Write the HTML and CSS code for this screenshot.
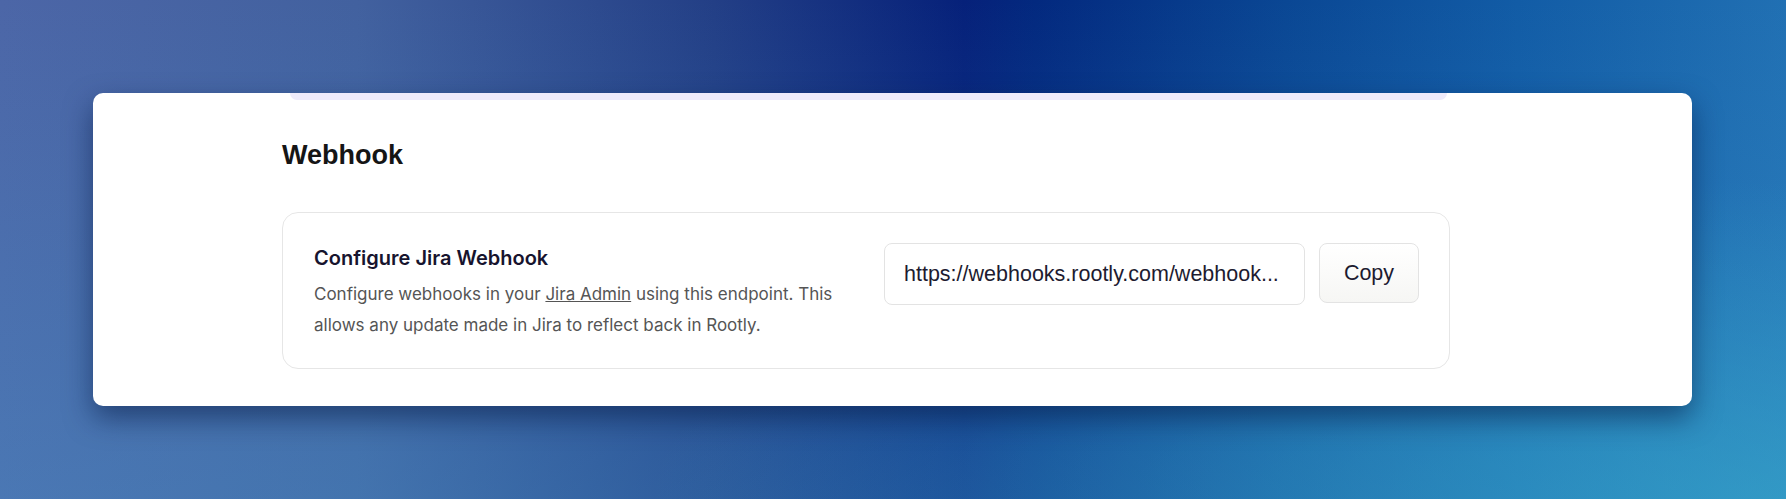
FILE: index.html
```html
<!DOCTYPE html>
<html lang="en">
<head>
    <meta charset="UTF-8">
    <meta name="viewport" content="width=device-width, initial-scale=1.0">
    <title>Webhook</title>
    <link rel="stylesheet" href="styles.css">
</head>
<body>
    <div class="panel">
        <div class="content">
            <!-- bottom edge of the section above, scrolled out of view -->
            <div class="prev-section"></div>
            <h2>Webhook</h2>
            <div class="webhook-box">
                <div class="webhook-info">
                    <h3>Configure Jira Webhook</h3>
                    <p>Configure webhooks in your <a href="#">Jira Admin</a> using this endpoint. This allows any update made in Jira to reflect back in Rootly.</p>
                </div>
                <div class="webhook-copy">
                    <div class="url-field">https://webhooks.rootly.com/webhook...</div>
                    <button>Copy</button>
                </div>
            </div>
        </div>
    </div>
</body>
</html>
```

FILE: styles.css
```css
html, body {
    height: 100%;
}
body {
    margin: 0;
    overflow: hidden;
    font-family: "Liberation Sans", Arial, sans-serif;
    background:
        radial-gradient(ellipse at 100% 100%, rgba(55, 175, 205, 0.55) 0%, rgba(55, 175, 205, 0) 45%),
        linear-gradient(to bottom, rgba(70, 160, 210, 0) 0%, rgba(70, 160, 210, 0.3) 100%),
        linear-gradient(to right, #4c66a7 0%, #42619f 20%, #233f86 40%, #06217a 54%, #03297f 58%, #0a4794 72%, #125ca6 85%, #2170b3 100%);
}
.panel {
    box-sizing: border-box;
    width: 1599px;
    height: 313px;
    margin: 93px 0 0 93px;
    background-color: #fff;
    border-radius: 10px;
    box-shadow: 0 12px 28px rgba(5, 25, 70, 0.55);
    overflow: hidden;
}
.content {
    width: 1168px;
    margin-left: 189px;
}
.prev-section {
    height: 7px;
    margin: 0 3px 0 8px;
    background-color: #eeebfb;
    border-radius: 0 0 14px 14px;
}
h2 {
    margin: 39px 0 41px;
    font-size: 27px;
    line-height: 32px;
    font-weight: bold;
    color: #151515;
}
.webhook-box {
    display: flex;
    justify-content: space-between;
    align-items: flex-start;
    padding: 30px 30px 27px 31px;
    border: 1px solid #e6e6e6;
    border-radius: 16px;
}
.webhook-info {
    width: 540px;
    margin-top: 2px;
    font-family: Inter, "Noto Sans", sans-serif;
}
h3 {
    margin: 0 0 8px;
    font-size: 20px;
    line-height: 26px;
    font-weight: 600;
    color: #17142e;
}
p {
    margin: 0;
    font-size: 17px;
    line-height: 31px;
    color: #555;
}
p a {
    color: #555;
}
.webhook-copy {
    display: flex;
    align-items: flex-start;
    gap: 14px;
}
.url-field,
button {
    box-sizing: border-box;
    border: 1px solid #e3e3e3;
    border-radius: 8px;
    font-family: "Liberation Sans", Arial, sans-serif;
    font-size: 21.5px;
    color: #1d1b30;
}
.url-field {
    width: 421px;
    height: 62px;
    padding: 0 15px 0 19px;
    line-height: 60px;
    white-space: nowrap;
    overflow: hidden;
}
button {
    width: 100px;
    height: 60px;
    background: linear-gradient(to bottom, #ffffff, #f6f6f4);
    cursor: pointer;
}
```
